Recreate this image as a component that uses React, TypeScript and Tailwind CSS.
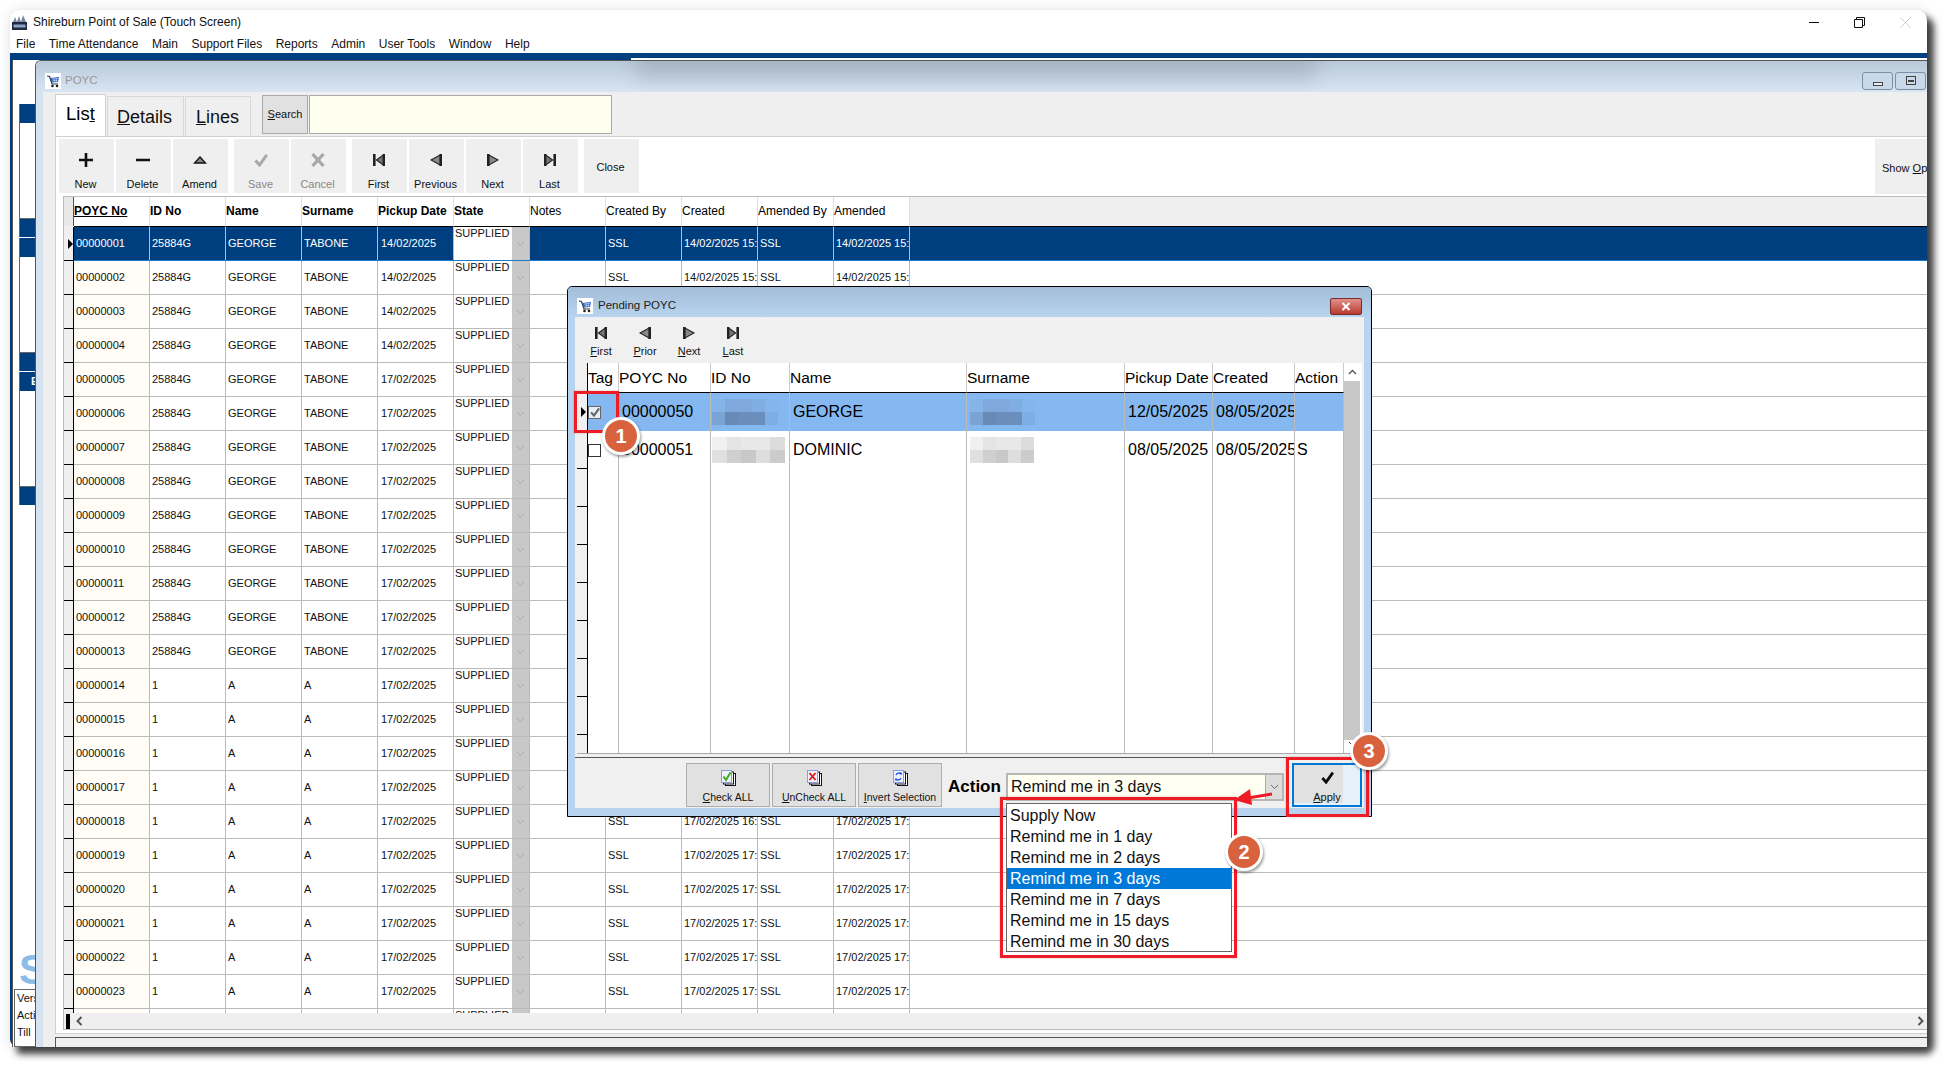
import React from "react";

const Cart = () => (
  <svg width="14" height="14" viewBox="0 0 14 14">
    <path d="M1 2 L3.5 2.5 L6 10 L12 10" fill="none" stroke="#334" strokeWidth="1.2" />
    <path d="M4 4 L13 3 L12 8 L5.5 8.5 Z" fill="#2a5fc0" />
    <path d="M6 5 L12 4.5 M6.5 6.8 L11.6 6.4 M8 4 L8.4 8 M10.3 4 L10.4 8" stroke="#cfe0ff" strokeWidth=".6" />
    <circle cx="6.5" cy="12" r="1.3" fill="#222" />
    <circle cx="11" cy="12" r="1.3" fill="#222" />
  </svg>
);

const Logo = () => (
  <svg width="15" height="16" viewBox="0 0 15 16">
    <path d="M1 8 L3 3 L5 8 L7 2 L9 8 L11 1 L14 8 Z" fill="#7a8aa0" />
    <rect x="0" y="8" width="15" height="8" fill="#1f2a44" />
    <rect x="1.5" y="10.5" width="12" height="3" fill="#8fa3c4" />
  </svg>
);

const Plus = () => (
  <svg width="14" height="14" viewBox="0 0 14 14"><path d="M7 0V14M0 7H14" stroke="#111" strokeWidth="2.6" /></svg>
);
const Minus = () => (
  <svg width="14" height="14" viewBox="0 0 14 14"><path d="M0 7H14" stroke="#111" strokeWidth="2.6" /></svg>
);
const Up = () => (
  <svg width="14" height="14" viewBox="0 0 14 14"><path d="M7 4 L12.5 10 H1.5 Z" fill="#888" stroke="#111" strokeWidth="1.3" /></svg>
);
const Check = ({ color = "#a8a8a8", size = 14 }: { color?: string; size?: number }) => (
  <svg width={size} height={size} viewBox="0 0 14 14"><path d="M1.5 7.5 L5.5 12 L12.8 1.8" fill="none" stroke={color} strokeWidth="3" /></svg>
);
const Cross = () => (
  <svg width="14" height="14" viewBox="0 0 14 14"><path d="M1.5 1L12.5 13M12.5 1L1.5 13" stroke="#a8a8a8" strokeWidth="3.2" /></svg>
);
const First = () => (
  <svg width="12" height="12" viewBox="0 0 12 12">
    <rect x="0" y="0" width="2.6" height="12" fill="#222" />
    <path d="M3.4 6 L10.6 .8 V11.2 Z" fill="#777" stroke="#222" strokeWidth="1.1" />
    <rect x="9.6" y="0" width="2.4" height="12" fill="#222" />
  </svg>
);
const Prev = () => (
  <svg width="12" height="12" viewBox="0 0 12 12">
    <path d="M1 6 L10.5 .8 V11.2 Z" fill="#888" stroke="#222" strokeWidth="1.1" />
    <rect x="9.4" y="0" width="2.6" height="12" fill="#222" />
  </svg>
);
const Next = () => (
  <svg width="12" height="12" viewBox="0 0 12 12">
    <path d="M11 6 L1.5 .8 V11.2 Z" fill="#888" stroke="#222" strokeWidth="1.1" />
    <rect x="0" y="0" width="2.6" height="12" fill="#222" />
  </svg>
);
const Last = () => (
  <svg width="12" height="12" viewBox="0 0 12 12">
    <rect x="9.4" y="0" width="2.6" height="12" fill="#222" />
    <path d="M8.6 6 L1.4 .8 V11.2 Z" fill="#777" stroke="#222" strokeWidth="1.1" />
    <rect x="0" y="0" width="2.4" height="12" fill="#222" />
  </svg>
);
const Chev = ({ color = "#999" }: { color?: string }) => (
  <svg width="9" height="6" viewBox="0 0 9 6"><path d="M1 1 L4.5 4.5 L8 1" fill="none" stroke={color} strokeWidth="1" /></svg>
);

const DocIcon = ({ kind }: { kind: "check" | "x" | "invert" }) => (
  <svg width="15" height="16" viewBox="0 0 15 16">
    <rect x="4.5" y="3.5" width="10" height="12" fill="#fff" stroke="#112" />
    <rect x="2.5" y="2" width="10" height="12" fill="#fff" stroke="#112" />
    <rect x=".5" y=".5" width="10" height="12" fill="#eef2ff" stroke="#8f9be0" />
    {kind === "check" && <path d="M2.5 6.5 L5 10 L9.5 2.5" fill="none" stroke="#3fae1d" strokeWidth="2" />}
    {kind === "x" && <path d="M2.5 3 L8.5 10 M8.5 3 L2.5 10" fill="none" stroke="#e01818" strokeWidth="1.9" />}
    {kind === "invert" && <path d="M3 5 A3 3 0 0 1 8 4 L8.5 2.5 M8 8 A3 3 0 0 1 3 9 L2.5 10.5" fill="none" stroke="#1a55e0" strokeWidth="1.4" />}
  </svg>
);

type ToolProps = { label: string; icon?: React.ReactNode; disabled?: boolean; gap?: string };
const Tool = ({ label, icon, disabled, gap }: ToolProps) => (
  <div className={`w-[55px] h-[54px] bg-[#efefef] flex flex-col items-center shrink-0 pr-[2px] ${gap ?? ""}`}>
    {icon ? (
      <>
        <div className="h-[14px] mt-[14px] flex items-center justify-center">{icon}</div>
        <div className={`mt-[10px] text-[11px] leading-[14px] ${disabled ? "text-[#888]" : "text-[#111]"}`}>{label}</div>
      </>
    ) : (
      <div className="mt-[21px] text-[11px] leading-[14px] text-[#111]">{label}</div>
    )}
  </div>
);

const colW = "w-[76px] shrink-0 border-r border-[#bbbbbb] overflow-hidden whitespace-nowrap flex items-center";

const Cell = ({ text, cls = "" }: { text: string; cls?: string }) => (
  <div className={`${colW} pl-[2px] ${cls}`}>{text}</div>
);

type Row = { no: string; id: string; name: string; sur: string; date: string; created: string; amended: string };

const rows: Row[] = [];
for (let i = 1; i <= 24; i++) {
  const no = String(i).padStart(8, "0");
  const early = i <= 4;
  const date = early ? "14/02/2025" : "17/02/2025";
  rows.push({
    no,
    id: i <= 13 ? "25884G" : "1",
    name: i <= 13 ? "GEORGE" : "A",
    sur: i <= 13 ? "TABONE" : "A",
    date,
    created: early ? "14/02/2025 15:28" : i <= 18 ? "17/02/2025 16:02" : "17/02/2025 17:10",
    amended: early ? "14/02/2025 15:41" : "17/02/2025 17:20",
  });
}

const GridRow = ({ r, active }: { r: Row; active: boolean }) => (
  <div className={`h-[34px] shrink-0 flex text-[11px] border-b ${active ? "bg-[#003f7f] text-white border-[#1a78c8]" : "bg-white text-[#111] border-[#bbbbbb]"}`}>
    <div className="w-[10px] shrink-0 bg-[#efefef] border-r border-b border-black -mb-px flex items-center justify-end">
      {active && <div className="w-0 h-0 border-y-[5px] border-y-transparent border-l-[5px] border-l-black" />}
    </div>
    <div className={`${colW} pl-[2px] ${active ? "" : "bg-[#fffdf5]"}`}>{r.no}</div>
    <Cell text={r.id} />
    <Cell text={r.name} />
    <Cell text={r.sur} />
    <div className={`${colW} pl-[3px]`}>{r.date}</div>
    <div className="w-[76px] shrink-0 flex border-r border-[#bbbbbb] bg-white text-[#111]">
      <div className="flex-1 pl-[1px] leading-[13px]">SUPPLIED</div>
      <div className="w-[17px] bg-[#c8c8c8] flex items-center justify-center"><Chev color="#aaaaaa" /></div>
    </div>
    <Cell text="" />
    <Cell text="SSL" />
    <Cell text={r.created} />
    <Cell text="SSL" />
    <Cell text={r.amended} />
    <div className="flex-1" />
  </div>
);

const heads = [
  { t: "POYC No", b: true, u: true },
  { t: "ID No", b: true },
  { t: "Name", b: true },
  { t: "Surname", b: true },
  { t: "Pickup Date", b: true },
  { t: "State", b: true },
  { t: "Notes" },
  { t: "Created By" },
  { t: "Created" },
  { t: "Amended By" },
  { t: "Amended" },
];

const Panel = ({ label }: { label?: string }) => (
  <div className="h-[133px] flex flex-col justify-between border-l border-[#666] bg-white mb-[1px] shrink-0">
    <div className="h-[19px] bg-[#003f7f] text-white text-[11px] font-bold pl-[11px] leading-[19px] overflow-hidden">{label}</div>
    <div className="h-[19px] bg-[#003f7f] border-t border-[#666]" />
  </div>
);

const blocksBlue = [
  ["bg-[#84b4e8]", "bg-[#7fa9dc]", "bg-[#7fa9dc]", "bg-[#80aee2]", "bg-[#84b6ee]"],
  ["bg-[#7aa4d4]", "bg-[#6689b5]", "bg-[#6a8ebb]", "bg-[#6a8fbc]", "bg-[#7eaee3]"],
];
const blocksGrey = [
  ["bg-[#f0f0f0]", "bg-[#e4e4e4]", "bg-[#e8e8e8]", "bg-[#e8e8e8]", "bg-[#dcdcdc]"],
  ["bg-[#e0e0e0]", "bg-[#cfcfcf]", "bg-[#c8c8c8]", "bg-[#dddddd]", "bg-[#cccccc]"],
];

const Pixels = ({ set, w }: { set: string[][]; w: string }) => (
  <div className={`${w} h-[26px] flex flex-col`}>
    {set.map((row, i) => (
      <div key={i} className="flex-1 flex">
        {row.map((c, j) => (
          <div key={j} className={`flex-1 ${c}`} />
        ))}
      </div>
    ))}
  </div>
);

const Box = ({ on }: { on?: boolean }) => (
  <div className={`w-[13px] h-[13px] border flex items-center justify-center ${on ? "bg-[#e4eefa] border-[#666]" : "bg-white border-[#333]"}`}>
    {on && <Check color="#666" size={10} />}
  </div>
);

const dCol = "shrink-0 border-r border-[#bbbbbb] overflow-hidden whitespace-nowrap";
const dCell = "h-[38px] flex items-center";

const DColumn = ({ w, a, b, pl = "pl-[3px]" }: { w: string; a: React.ReactNode; b: React.ReactNode; pl?: string }) => (
  <div className={`${w} ${dCol} flex flex-col`}>
    <div className={`${dCell} ${pl} bg-[#85b8f0]`}>{a}</div>
    <div className={`${dCell} ${pl}`}>{b}</div>
  </div>
);

const dHeads = [
  { t: "Tag", w: "w-[31px]" },
  { t: "POYC No", w: "w-[92px]" },
  { t: "ID No", w: "w-[79px]" },
  { t: "Name", w: "w-[177px]" },
  { t: "Surname", w: "w-[158px]" },
  { t: "Pickup Date", w: "w-[88px]" },
  { t: "Created", w: "w-[82px]" },
  { t: "Action", w: "w-[49px]" },
];

const NavBtn = ({ icon, first, rest }: { icon: React.ReactNode; first: string; rest: string }) => (
  <div className="w-[44px] flex flex-col items-center">
    <div className="h-[12px] mt-[10px] flex items-center">{icon}</div>
    <div className="mt-[5px] text-[11px] leading-[14px] text-[#111]"><u>{first}</u>{rest}</div>
  </div>
);

const SmallBtn = ({ kind, first, rest }: { kind: "check" | "x" | "invert"; first: string; rest: string }) => (
  <div className="w-[84px] h-[44px] bg-[#e1e1e1] border border-[#adadad] flex flex-col items-center shrink-0">
    <div className="mt-[6px] h-[16px]"><DocIcon kind={kind} /></div>
    <div className="mt-[4px] text-[10.5px] leading-[14px] text-[#111] whitespace-nowrap"><u>{first}</u>{rest}</div>
  </div>
);

const Badge = ({ n, pos }: { n: string; pos: string }) => (
  <div className={`absolute ${pos} w-[38px] h-[38px] rounded-full bg-[#d8623e] border-[3px] border-white shadow-[1px_2px_3px_rgba(0,0,0,0.4)] flex items-center justify-center text-white font-bold text-[20px]`}>{n}</div>
);

const Frame = ({ pos }: { pos: string }) => (
  <div className={`absolute ${pos} border-[3px] border-[#ee1c25] shadow-[0_0_2px_rgba(0,0,0,0.25)]`} />
);

const options = ["Supply Now", "Remind me in 1 day", "Remind me in 2 days", "Remind me in 3 days", "Remind me in 7 days", "Remind me in 15 days", "Remind me in 30 days"];

export default function App() {
  return (
    <div className="relative w-[1953px] h-[1073px] overflow-hidden bg-white font-['Liberation_Sans',Arial,sans-serif]">
      <div className="pl-[10px] pt-[10px]">
        <div className="w-[1917px] h-[1037px] flex flex-col bg-white rounded-t-[10px] rounded-br-[8px] shadow-[7px_7px_7px_rgba(0,0,0,0.75),0_0_14px_rgba(0,0,0,0.12)]">
          {/* title bar */}
          <div className="h-[24px] shrink-0 flex items-center pl-[2px] pr-[16px]">
            <Logo />
            <span className="ml-[6px] text-[12px] text-[#111]">Shireburn Point of Sale (Touch Screen)</span>
            <div className="ml-auto flex items-center gap-[35px]">
              <div className="w-[10px] h-[1px] bg-black" />
              <svg width="11" height="11" viewBox="0 0 11 11"><path d="M2.5 2.5V.5H10.5V8.5H8.5M.5 2.5H8.5V10.5H.5Z" fill="none" stroke="#111" /></svg>
              <svg width="11" height="11" viewBox="0 0 11 11"><path d="M.5 .5L10.5 10.5M10.5 .5L.5 10.5" stroke="#ccc" /></svg>
            </div>
          </div>
          {/* menu */}
          <div className="h-[19px] shrink-0 flex items-center pl-[6px] gap-[13.5px] text-[12px] text-[#111]">
            {["File", "Time Attendance", "Main", "Support Files", "Reports", "Admin", "User Tools", "Window", "Help"].map((m) => (
              <span key={m}>{m}</span>
            ))}
          </div>
          {/* navy rule */}
          <div className="relative h-[7px] shrink-0 bg-[#003f7f]">
            <div className="absolute left-[621px] right-0 bottom-0 h-[2px] bg-white" />
          </div>
          {/* workspace */}
          <div className="flex-1 min-h-0 flex border-l-2 border-[#003f7f] rounded-bl-[8px]">
            {/* left panels */}
            <div className="w-[23px] shrink-0 flex flex-col border-l border-[#555] bg-white pl-[6px] pt-[44px] overflow-hidden">
              <Panel />
              <Panel />
              <Panel label="E" />
              <div className="mt-auto h-[30px] text-[#8bbde8] font-bold text-[42px] leading-[30px]">S</div>
              <div className="-ml-[5px] w-[24px] h-[58px] mt-[4px] border border-[#666] text-[11px] text-[#111] overflow-hidden whitespace-nowrap pl-[2px] leading-[17px]">
                <div>Version</div>
                <div>Active</div>
                <div>Till</div>
              </div>
            </div>
            {/* POYC child */}
            <div className="flex-1 min-w-0 flex flex-col border-l border-t border-[#555] rounded-tl-[6px] overflow-hidden">
              <div className="relative h-[31px] shrink-0 flex items-center pt-[8px] bg-gradient-to-b from-[#b9c9d9] to-[#d8e6f3] overflow-hidden">
                <div className="absolute left-[600px] w-[680px] top-[-16px] h-[36px] bg-black/10 blur-[10px]" />
                <div className="relative ml-[9px] w-[16px] h-[16px] bg-white flex items-center justify-center"><Cart /></div>
                <span className="relative ml-[4px] text-[11.5px] text-[#999]">POYC</span>
                <div className="relative ml-auto flex gap-[2px] pr-[1px]">
                  <div className="w-[31px] h-[18px] rounded-[3px] border border-[#7d8fa5] bg-[#c9d9ea] flex items-end justify-center pb-[3px]">
                    <div className="w-[10px] h-[4px] border border-[#444] bg-[#eee]" />
                  </div>
                  <div className="w-[31px] h-[18px] rounded-[3px] border border-[#7d8fa5] bg-[#c9d9ea] flex items-center justify-center">
                    <div className="w-[10px] h-[9px] border border-[#444] flex items-center justify-center"><div className="w-[6px] h-[2px] bg-[#444]" /></div>
                  </div>
                </div>
              </div>
              <div className="flex-1 min-h-0 flex">
                <div className="w-[7px] shrink-0 bg-[#d5e3f0]" />
                <div className="flex-1 min-w-0 flex flex-col bg-[#efefef]">
                  {/* tabs */}
                  <div className="h-[44px] shrink-0 flex items-end pl-[12px] relative">
                    <div className="w-[51px] h-[42px] bg-white border border-b-0 border-[#d0d0d0] text-[18.5px] text-black pl-[10px] leading-[38px]">Lis<u>t</u></div>
                    <div className="w-[77px] h-[40px] ml-[1px] border border-b-0 border-[#d8d8d8] text-[18px] text-[#111] pl-[9px] leading-[40px]"><u>D</u>etails</div>
                    <div className="w-[66px] h-[40px] ml-[1px] border border-b-0 border-[#d8d8d8] text-[18px] text-[#111] pl-[10px] leading-[40px]"><u>L</u>ines</div>
                    <div className="ml-[11px] mb-[2px] w-[46px] h-[39px] border border-[#aaa] bg-[#e1e1e1] text-[11px] text-[#111] flex items-center justify-center"><span><u>S</u>earch</span></div>
                    <div className="ml-[1px] mb-[2px] w-[303px] h-[39px] border border-[#aaa] bg-[#fffff0]" />
                  </div>
                  {/* panel */}
                  <div className="flex-1 min-h-0 ml-[12px] flex flex-col bg-white border-l border-t border-b border-[#d0d0d0] pb-[3px]">
                    <div className="h-[59px] shrink-0 flex pl-[3px] pt-[2px] gap-[2px]">
                      <Tool label="New" icon={<Plus />} />
                      <Tool label="Delete" icon={<Minus />} />
                      <Tool label="Amend" icon={<Up />} />
                      <Tool label="Save" icon={<Check />} disabled gap="ml-[4px]" />
                      <Tool label="Cancel" icon={<Cross />} disabled />
                      <Tool label="First" icon={<First />} gap="ml-[4px]" />
                      <Tool label="Previous" icon={<Prev />} />
                      <Tool label="Next" icon={<Next />} />
                      <Tool label="Last" icon={<Last />} />
                      <Tool label="Close" gap="ml-[4px]" />
                      <div className="ml-auto w-[52px] h-[55px] bg-[#efefef] text-[11px] text-[#111] whitespace-nowrap overflow-hidden pl-[7px] pt-[22px] leading-[14px]">
                        Show <u>O</u>ptions
                      </div>
                    </div>
                    {/* grid */}
                    <div className="flex-1 min-h-0 ml-[7px] flex flex-col border-l border-t border-b border-[#bbbbbb]">
                      <div className="h-[30px] shrink-0 flex text-[12px] text-black bg-[#efefef]">
                        <div className="w-[10px] shrink-0 bg-[#e8e8e8] border-r border-[#555] mb-[1px]" />
                        {heads.map((h) => (
                          <div key={h.t} className={`w-[76px] shrink-0 bg-white border-r border-b border-r-[#e0e0e0] border-b-black leading-[29px] whitespace-nowrap overflow-hidden ${h.b ? "font-bold" : ""} ${h.u ? "underline" : ""}`}>
                            {h.t}
                          </div>
                        ))}
                        <div className="flex-1 border-b border-black" />
                      </div>
                      <div className="flex-1 min-h-0 overflow-hidden flex flex-col">
                        {rows.map((r, i) => (
                          <GridRow key={r.no} r={r} active={i === 0} />
                        ))}
                      </div>
                      <div className="h-[16px] shrink-0 bg-[#efefef] flex items-center pl-[2px] pr-[3px]">
                        <div className="w-[4px] h-[15px] bg-black" />
                        <svg className="ml-[6px]" width="7" height="10" viewBox="0 0 7 10"><path d="M5.5 1 L1.5 5 L5.5 9" fill="none" stroke="#555" strokeWidth="2" /></svg>
                        <svg className="ml-auto" width="7" height="10" viewBox="0 0 7 10"><path d="M1.5 1 L5.5 5 L1.5 9" fill="none" stroke="#555" strokeWidth="2" /></svg>
                      </div>
                    </div>
                  </div>
                  {/* status */}
                  <div className="h-[10px] shrink-0 ml-[12px] mt-[3px] border-t border-l border-[#555] bg-[#efefef] rounded-br-[8px]" />
                </div>
              </div>
            </div>
          </div>
        </div>
      </div>

      {/* Pending dialog */}
      <div className="absolute left-[567px] top-[286px] w-[805px] h-[531px] border border-black rounded-t-[5px] flex flex-col bg-[#b8d3ee] overflow-hidden">
        <div className="h-[30px] shrink-0 flex items-center pt-[8px] bg-gradient-to-b from-[#a3bdd8] to-[#b8d3ee] pl-[9px] pr-[9px]">
          <div className="w-[16px] h-[16px] bg-white flex items-center justify-center"><Cart /></div>
          <span className="ml-[5px] text-[11.5px] text-[#222]">Pending POYC</span>
          <div className="ml-auto w-[32px] h-[17px] rounded-[2px] border border-[#7a2a2a] bg-gradient-to-b from-[#e0908a] to-[#b8382e] flex items-center justify-center">
            <svg width="10" height="9" viewBox="0 0 10 9"><path d="M1.5 1L8.5 8M8.5 1L1.5 8" stroke="#fff" strokeWidth="2" /></svg>
          </div>
        </div>
        <div className="flex-1 min-h-0 mx-[7px] mb-[8px] bg-[#f0f0f0] flex flex-col">
          <div className="h-[46px] shrink-0 flex pl-[4px]">
            <NavBtn icon={<First />} first="F" rest="irst" />
            <NavBtn icon={<Prev />} first="P" rest="rior" />
            <NavBtn icon={<Next />} first="N" rest="ext" />
            <NavBtn icon={<Last />} first="L" rest="ast" />
          </div>
          <div className="flex-1 min-h-0 mx-[2px] flex flex-col bg-white text-[16px] text-black border-b border-[#aaa]">
            <div className="h-[30px] shrink-0 flex text-[15.5px]">
              <div className="w-[11px] shrink-0 bg-[#f0f0f0] border-r border-black" />
              {dHeads.map((h) => (
                <div key={h.t} className={`${h.w} shrink-0 border-r border-b border-r-[#cccccc] border-b-black leading-[29px] whitespace-nowrap overflow-hidden`}>{h.t}</div>
              ))}
              <div className="flex-1 flex justify-center pt-[6px] pr-[2px]"><svg width="9" height="6" viewBox="0 0 9 6"><path d="M1 5 L4.5 1.5 L8 5" fill="none" stroke="#555" strokeWidth="1.4" /></svg></div>
            </div>
            <div className="flex-1 min-h-0 flex">
              <div className="w-[11px] shrink-0 bg-[#f0f0f0] border-r border-black flex flex-col overflow-hidden">
                <div className="h-[38px] shrink-0 border-b border-black flex items-center justify-end pr-[1px]">
                  <div className="w-0 h-0 border-y-[5px] border-y-transparent border-l-[5px] border-l-black" />
                </div>
                {[0, 1, 2, 3, 4, 5, 6, 7, 8].map((n) => (
                  <div key={n} className="h-[38px] shrink-0 border-b border-black" />
                ))}
              </div>
              <DColumn w="w-[31px]" pl="pl-0" a={<Box on />} b={<Box />} />
              <DColumn w="w-[92px]" a="00000050" b="00000051" />
              <DColumn w="w-[79px]" pl="pl-[1px]" a={<Pixels set={blocksBlue} w="w-[66px]" />} b={<Pixels set={blocksGrey} w="w-[73px]" />} />
              <DColumn w="w-[177px]" a="GEORGE" b="DOMINIC" />
              <DColumn w="w-[158px]" a={<Pixels set={blocksBlue} w="w-[65px]" />} b={<Pixels set={blocksGrey} w="w-[64px]" />} />
              <DColumn w="w-[88px]" a="12/05/2025" b="08/05/2025" />
              <DColumn w="w-[82px]" a="08/05/2025" b="08/05/2025" />
              <DColumn w="w-[49px]" pl="pl-[2px]" a="" b="S" />
              <div className="flex-1 flex flex-col pr-[2px]">
                <div className="h-[359px] -mt-[12px] bg-[#c8c8c8] shrink-0" />
                <div className="flex-1 flex justify-center pt-[1px]"><Chev color="#555" /></div>
              </div>
            </div>
          </div>
          <div className="h-[3px] shrink-0" />
          <div className="h-[51px] shrink-0 border-t border-[#555] flex pl-[111px] pt-[5px] gap-[2px]">
            <SmallBtn kind="check" first="C" rest="heck ALL" />
            <SmallBtn kind="x" first="U" rest="nCheck ALL" />
            <SmallBtn kind="invert" first="I" rest="nvert Selection" />
            <div className="ml-[4px] w-[56px] pt-[14px] text-[17px] font-bold text-black leading-[20px]">Action</div>
            <div className="mt-[10px] w-[278px] h-[28px] border-2 border-[#b5b5b5] bg-[#fffff2] flex items-center pl-[3px] text-[16px] text-[#111] relative">
              Remind me in 3 days
              <div className="absolute right-0 top-0 bottom-0 w-[17px] bg-[#dcdcdc] border-l border-[#aaa] flex items-center justify-center"><Chev color="#666" /></div>
            </div>
            <div className="relative ml-[6px] w-[70px] h-[44px] bg-[#e5f1fb] border-2 border-[#0078d7] flex flex-col items-center">
              <div className="absolute left-0 top-0 w-[49px] h-[38px] bg-[#e1e1e1]" />
              <div className="relative mt-[6px] h-[16px]"><Check color="#0a0a0a" size={13} /></div>
              <div className="relative mt-[3px] text-[11px] leading-[14px] text-[#111]"><u>A</u>pply</div>
            </div>
          </div>
        </div>
      </div>

      {/* dropdown */}
      <div className="absolute left-[1006px] top-[803px] w-[226px] h-[149px] bg-white border border-[#666] py-[1px] text-[16px] text-[#111]">
        {options.map((o, i) => (
          <div key={o} className={`h-[21px] leading-[21px] pl-[3px] whitespace-nowrap ${i === 3 ? "bg-[#0078d7] text-white" : ""}`}>{o}</div>
        ))}
      </div>

      {/* annotations */}
      <Frame pos="left-[574px] top-[391px] w-[45px] h-[42px]" />
      <Frame pos="left-[1000px] top-[797px] w-[237px] h-[161px]" />
      <Frame pos="left-[1286px] top-[757px] w-[83px] h-[60px]" />
      <svg className="absolute left-[1232px] top-[786px]" width="42" height="20" viewBox="0 0 42 20">
        <path d="M40 8 L16 12" stroke="#ee1c25" strokeWidth="3" />
        <path d="M2 14 L18 3 L20 19 Z" fill="#ee1c25" />
      </svg>
      <Badge n="1" pos="left-[602px] top-[417px]" />
      <Badge n="2" pos="left-[1225px] top-[833px]" />
      <Badge n="3" pos="left-[1350px] top-[732px]" />
    </div>
  );
}
